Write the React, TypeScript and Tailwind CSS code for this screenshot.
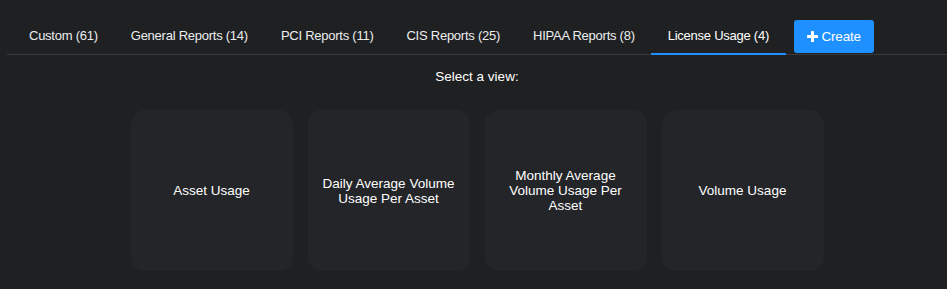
import React from "react";

const tabs = [
  { label: "Custom (61)" },
  { label: "General Reports (14)" },
  { label: "PCI Reports (11)" },
  { label: "CIS Reports (25)" },
  { label: "HIPAA Reports (8)" },
  { label: "License Usage (4)", active: true },
];

const views = [
  "Asset Usage",
  "Daily Average Volume Usage Per Asset",
  "Monthly Average Volume Usage Per Asset",
  "Volume Usage",
];

const PlusIcon = () => (
  <svg width="11" height="11" viewBox="0 0 11 11" className="mr-[4px]">
    <rect x="4" y="0" width="3" height="11" rx="0.6" fill="#ffffff" />
    <rect x="0" y="4" width="11" height="3" rx="0.6" fill="#ffffff" />
  </svg>
);

export default function App() {
  return (
    <div
      className="min-h-[289px] w-full bg-[#1f2022] text-[13px] text-[#f2f4f6]"
      style={{ fontFamily: '"Liberation Sans", Arial, sans-serif' }}
    >
      <div className="ml-[7px] pt-[20px]">
        {/* tab bar */}
        <div className="flex items-start border-b border-[#38393c] pl-[5.5px]">
          {tabs.map((t) => (
            <div
              key={t.label}
              className={`-mb-px px-[16.5px] pt-[8px] pb-[10px] leading-[15px] tracking-[-0.25px] border-b-2 whitespace-nowrap cursor-pointer ${
                t.active
                  ? "border-[#1e90ff] text-white"
                  : "border-transparent text-[#eceef0]"
              }`}
            >
              {t.label}
            </div>
          ))}
          <button className="ml-[8px] flex h-[33px] items-center rounded-[3px] bg-[#1e90ff] px-[13px] text-[13.5px] leading-[15px] tracking-[-0.2px] text-white">
            <PlusIcon />
            <span>Create</span>
          </button>
        </div>

        {/* content */}
        <div className="flex flex-col items-center">
          <p className="mt-[14px] text-[13.5px] leading-[15px] text-white">
            Select a view:
          </p>
          <div className="mt-[26px] flex gap-[15px]">
            {views.map((v) => (
              <div
                key={v}
                className="flex h-[161px] w-[162px] cursor-pointer items-center justify-center rounded-[14px] bg-[#242528] px-3 text-center text-[13.5px] leading-[15px] text-white"
              >
                {v}
              </div>
            ))}
          </div>
        </div>
      </div>
    </div>
  );
}
